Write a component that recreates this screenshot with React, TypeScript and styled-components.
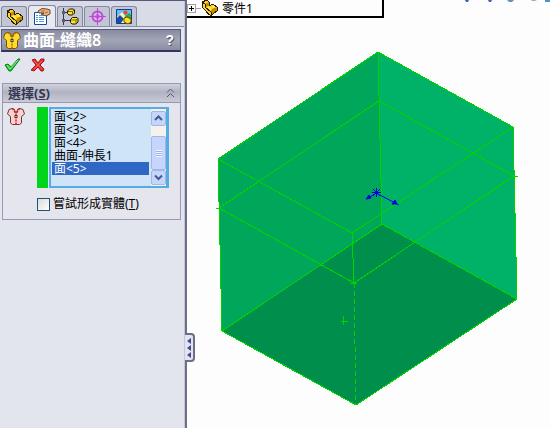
import React, { useState } from "react";
import styled, { createGlobalStyle } from "styled-components";

const GlobalStyle = createGlobalStyle`
  * { box-sizing: border-box; }
  body { margin: 0; background: #fdfdfd; }
  button { padding: 0; border: 0; background: none; font: inherit; color: inherit; }
`;

const Shell = styled.div`
  display: grid;
  grid-template-columns: 187px 1fr;
  min-height: 100vh;
  overflow: hidden;
  font: 12px/13px "Noto Sans", "Noto Sans CJK TC", sans-serif;
  color: #000;
`;

const Sidebar = styled.aside`
  position: relative;
  background: #e2e4ee;
  border-top: 1px solid #555a7c;
  border-right: 2px solid #6c6f87;
  box-shadow: inset -1px 0 #c2c8dc;
`;

const TabStrip = styled.div`
  display: flex;
  align-items: flex-end;
  gap: 1px;
  height: 26px;
  padding-left: 1px;
  margin-right: 1px;
  background: #d9dbe6;
  border-bottom: 1px solid #878ba3;
`;

const Tab = styled.button<{ $active?: boolean }>`
  display: grid;
  place-items: center;
  width: ${(p) => (p.$active ? 28 : 26)}px;
  height: ${(p) => (p.$active ? 22 : 20)}px;
  margin-bottom: ${(p) => (p.$active ? -1 : 0)}px;
  background: ${(p) => (p.$active ? "#e8eaf2" : "#c3c6d5")};
  border: 1px solid #85899f;
  border-bottom: 0;
  border-radius: 3px 3px 0 0;
`;

const TitleBar = styled.header`
  display: flex;
  align-items: center;
  gap: 2px;
  height: 23px;
  margin: 2px 4px 0 1px;
  padding: 0 6px 0 1px;
  background: linear-gradient(#888a9f, #a2a4b6 50%, #8b8da3);
  border: 1px solid #555976;
  border-bottom: 2px solid #34365c;
  color: #fff;
`;

const Title = styled.h1`
  flex: 1;
  margin: 0;
  font-size: 16px;
  line-height: 20px;
  font-weight: 600;
  white-space: nowrap;
`;

const HelpButton = styled.button`
  font: bold 14px/18px "Liberation Sans", sans-serif;
  text-shadow: 1px 1px #55586f;
`;

const Actions = styled.div`
  display: flex;
  gap: 9px;
  padding: 5px 4px 0;
  height: 31px;
`;

const IconButton = styled.button`
  display: block;
  width: 17px;
  height: 17px;
`;

const Group = styled.section`
  margin: 0 4px 0 2px;
  background: #e5e5ed;
  border: 1px solid #969ab2;
`;

const GroupHeader = styled.header`
  display: flex;
  justify-content: space-between;
  align-items: center;
  height: 19px;
  padding: 0 5px;
  background: linear-gradient(#d0d1dc, #b1b3c3 45%, #c9cad7);
  border-bottom: 1px solid #9699ad;
`;

const GroupTitle = styled.h2`
  margin: 0;
  color: #34364f;
  font-size: 13px;
  line-height: 18px;
  font-weight: 700;
`;

const GroupBody = styled.div`
  display: grid;
  grid-template-columns: 29px 1fr;
  column-gap: 5px;
  padding: 4px 11px 8px 0;
`;

const GroupIcon = styled.div`
  padding-left: 4px;
`;

const SelectionBox = styled.div`
  display: flex;
  height: 81px;
  border-left: 11px solid #00d51c;
`;

const ListFrame = styled.div`
  flex: 1;
  display: flex;
  margin-left: 1px;
  background: #cfe4f7;
  border: 2px solid #55ace4;
  border-right-width: 3px;
`;

const FaceList = styled.ul`
  flex: 1;
  margin: 0;
  padding: 1px 2px 0 1px;
  list-style: none;
`;

const FaceItem = styled.li<{ $selected: boolean }>`
  height: 13px;
  padding-left: 2px;
  line-height: 13px;
  white-space: nowrap;
  background: ${(p) => (p.$selected ? "#2f67c5" : "transparent")};
  color: ${(p) => (p.$selected ? "#fff" : "#000")};
`;

const ScrollTrack = styled.div`
  display: flex;
  flex-direction: column;
  width: 15px;
  padding: 2px 0 1px;
  background: #f3f2ed;
`;

const ScrollButton = styled.button`
  display: grid;
  place-items: center;
  height: 15px;
  background: #c6d5fb;
  border: 1px solid #a4b7e4;
  border-radius: 2px;
`;

const ScrollThumb = styled.div`
  display: flex;
  flex-direction: column;
  justify-content: center;
  align-items: center;
  height: 34px;
  margin-top: 10px;
  background: #c6d5fb;
  border: 1px solid #a4b7e4;
  border-radius: 2px;
`;

const Grip = styled.span`
  width: 6px;
  height: 7px;
  background: repeating-linear-gradient(#f4f8ff 0 1px, #9cb1e6 1px 2px);
`;

const CheckLabel = styled.label`
  grid-column: 2;
  display: flex;
  align-items: center;
  gap: 3px;
  margin-top: 9px;
  line-height: 14px;
  white-space: nowrap;
`;

const CheckBox = styled.input`
  appearance: none;
  width: 13px;
  height: 13px;
  margin: 0;
  border: 1px solid #1d5180;
  background: linear-gradient(135deg, #dcdcd6, #fff);
  &:checked { background: #2f67c5; box-shadow: inset 0 0 0 2px #fff; }
`;

const Splitter = styled.button`
  position: absolute;
  z-index: 1;
  top: 332px;
  right: -10px;
  display: flex;
  flex-direction: column;
  align-items: center;
  justify-content: space-around;
  width: 10px;
  height: 29px;
  padding: 2px 0;
  background: #e2e4ee;
  border: 2px solid #6c6f87;
  border-left: 0;
  border-radius: 0 4px 4px 0;
`;

const Viewport = styled.main`
  display: flex;
  flex-direction: column;
  min-width: 0;
  background: #fdfdfd;
`;

const TopRow = styled.div`
  display: flex;
  justify-content: space-between;
  align-items: flex-start;
`;

const FeatureTree = styled.nav`
  display: flex;
  align-items: center;
  flex: 0 0 197px;
  height: 18px;
  border-right: 2px solid #000;
  border-bottom: 2px solid #000;
`;

const Expander = styled.button`
  display: grid;
  place-items: center;
  width: 9px;
  height: 9px;
  border: 1px solid #a5a5a0;
`;

const Connector = styled.span`
  width: 5px;
  border-top: 1px solid #a5a5a0;
`;

const TreeLabel = styled.span`
  margin-left: 4px;
`;

const Scene = styled.svg`
  flex: 1;
  display: block;
  width: 100%;
  min-height: 0;
`;

const Drawing = styled.svg`
  display: block;
  flex: none;
`;

function PartIcon() {
  return (
    <Drawing width="17" height="16" viewBox="0 0 17 16">
      <path d="M1 2 6 0 8 2 8 6 12 4 16 7 16 11 10 15.500 8 14.500 1 7Z" fill="#ffd427" />
      <path d="M4 4 8 2V6L11 9 16 7V11L10 15V11L4 7Z" fill="#c48a00" />
      <path d="M5 7 8 6 11 9 10 11ZM11 6 13 5 15 7 12 8Z" fill="#fff04a" />
      <path d="M1 2 6 0 8 2 8 6 12 4 16 7 16 11 10 15.500 8 14.500 1 7ZM1 2 4 4 4 7 10 12V15" fill="none" stroke="#2b1d00" strokeWidth="1" shapeRendering="crispEdges" />
    </Drawing>
  );
}

function PropertyIcon() {
  return (
    <Drawing width="18" height="17" viewBox="0 0 18 17">
      <path d="M1.500 4.500H10L13.500 8V16.500H1.500Z" fill="#fff" stroke="#164d91" />
      <path d="M3 7.500H5M6 7.500H11M3 9.500H5M6 9.500H11M3 11.500H5M6 11.500H11M3 13.500H5M6 13.500H11" stroke="#4c9be3" />
      <path d="M5 3 9 0.500 14 1 17 2V6L13 8 8 6 11 5 6 5Z" fill="#e8b184" stroke="#744620" />
      <path d="M8 3H12M12 5 15 4" stroke="#a96e42" />
    </Drawing>
  );
}

function ConfigIcon() {
  return (
    <Drawing width="17" height="17" viewBox="0 0 17 17">
      <path d="M1.500 0V17M2 4.500H6M2 12.500H8" fill="none" stroke="#35374a" />
      <path d="M0 3H3V6H0ZM0 11H3V14H0Z" fill="#5b5f77" />
      <path d="M5.500 3 7.500 1H11.500L12.500 2V5L10.500 7H7L5.500 5.500ZM8.500 11.500 10.500 9.500H15L16 10.500V14L14 16H10L8.500 14.500Z" fill="#ffe231" stroke="#1a1800" />
      <path d="M6 3.500H10.500V6.500M9 12H14V15.500M10.500 3.500 12 2M14 12 16 10.500" fill="none" stroke="#756600" />
    </Drawing>
  );
}

function DimensionIcon() {
  return (
    <Drawing width="17" height="17" viewBox="0 0 17 17" fill="none" stroke="#c545df">
      <path d="M8.500 0V17M0 8.500H17" strokeWidth="1" />
      <circle cx="8.500" cy="8.500" r="5" strokeWidth="2" />
      <path d="M6 8.500H11M8.500 6V11" strokeWidth="2" />
    </Drawing>
  );
}

function DisplayIcon() {
  return (
    <Drawing width="17" height="17" viewBox="0 0 17 17">
      <path d="M.5 1.500H15.500V15.500H.5Z" fill="#67bbff" stroke="#123f81" />
      <path d="M1 9 6 4 9 8V15H1Z" fill="#fff4a2" />
      <path d="M9 8 13 5 15 7V15H9Z" fill="#30ac3b" />
      <circle cx="9.500" cy="4.500" r="2" fill="#f04028" />
      <path d="M1 10 4 7 8 11 5 15H1Z" fill="#194aae" />
      <path d="M8 10 11 9 15 11V14L12 16 8 14Z" fill="#ffdd22" stroke="#765200" />
    </Drawing>
  );
}

function KnitIcon({ fill = "#ffdc2c", seam = "#b26d00", stroke = "#7a5000" }) {
  return (
    <Drawing width="18" height="19" viewBox="0 0 18 19">
      <path d="M5 1.500 7 2 9 6 11 2 13 1.500 16 2.500 17.500 7 14.500 9.500V16L12.500 17.500H5.500L3.500 16V9.500L.5 7 2 2.500Z" fill={fill} stroke={stroke} strokeLinejoin="round" />
      <path d="M5.500 1.500 9 7V17.500M12.500 1.500 9 7" fill="none" stroke={seam} strokeWidth="1.500" strokeDasharray="2 1" />
      <path d="M7.500 8H10.500V11H7.500Z" fill="#3f3940" />
      <path d="M8.500 9H9.500V10H8.500Z" fill="#fff" />
    </Drawing>
  );
}

function CheckIcon() {
  return (
    <Drawing width="17" height="17" viewBox="0 0 17 17">
      <path d="M1 8 4 7 7 10 14 2 16 2 7 14 5 14Z" fill="#29ce38" stroke="#087b19" strokeLinejoin="round" />
      <path d="M3 8 6 12 14 3" fill="none" stroke="#8af28b" />
    </Drawing>
  );
}

function CrossIcon() {
  return (
    <Drawing width="17" height="17" viewBox="0 0 17 17">
      <path d="M2 3 5 2 8 6 11 2 14 2 14 4 10 8 14 12 13 14 11 14 8 10 4 14 1 13 6 8Z" fill="#ee3334" stroke="#a3131b" strokeLinejoin="round" />
      <path d="M4 4 12 12M12 4 4 12" stroke="#f85555" />
    </Drawing>
  );
}

function Chevron({ down = false }: { down?: boolean }) {
  return (
    <Drawing width="9" height="7" viewBox="0 0 9 7">
      <path d={down ? "M1 1.500 4.500 5 8 1.500" : "M1 5 4.500 1.500 8 5"} fill="none" stroke="#435b8b" strokeWidth="2" />
    </Drawing>
  );
}

function CollapseIcon() {
  return (
    <Drawing width="9" height="10" viewBox="0 0 9 10">
      <path d="M1 4.500 4.500 1 8 4.500M1 9 4.500 5.500 8 9" fill="none" stroke="#54576f" />
    </Drawing>
  );
}

function ToolbarEdge() {
  return (
    <Drawing width="85" height="3" viewBox="0 0 85 3">
      <path d="M0 0H4L3 2H1ZM23 0H27L26 2H24Z" fill="#405fc0" />
      <path d="M42 0H49L47 2H44Z" fill="#6a8eb4" />
      <path d="M66 0H72L70 1H67Z" fill="#aaa" />
      <path d="M80 0H85V2H80Z" fill="#4a94cb" />
    </Drawing>
  );
}

function Model() {
  return (
    <Scene viewBox="187 18 363 410" role="img" aria-label="零件1">
      <path d="M378 52 218 159 222 331 382 224Z" fill="#00a65a" />
      <path d="M378 52 513 127 517 299 382 224Z" fill="#00b168" />
      <path d="M382 224 517 299 356 405 222 331Z" fill="#008e4c" />
      <g fill="none" stroke="#00d400" shapeRendering="crispEdges">
        <path d="M378 52 218 159 222 331 356 405 517 299 513 127ZM378 52 382 224 517 299M382 224 222 331" />
        <path d="M218 159 352 233 513 127M352 233 354 283" />
        <path d="M216 208H219L379 101 514 176H518M219 208 354 283 514 176" />
        <path d="M354 283 356 405" strokeDasharray="5 3" />
        <path d="M343.500 316V325M341 321.500H348M350 283.500H357" />
      </g>
      <g fill="none" stroke="#0000e8">
        <path d="M372 192.500H381M376.500 188V197M373 189 380 196M380 189 373 196M376 193 367 199M376 193 399 205" />
        <path d="M366 199 369 195 371 198ZM397 204 392 204 395 200Z" fill="#0000e8" />
      </g>
    </Scene>
  );
}

const tabs = [
  { label: "FeatureManager", icon: <PartIcon /> },
  { label: "PropertyManager", icon: <PropertyIcon /> },
  { label: "ConfigurationManager", icon: <ConfigIcon /> },
  { label: "DimXpertManager", icon: <DimensionIcon /> },
  { label: "DisplayManager", icon: <DisplayIcon /> },
];

const faces = ["面<2>", "面<3>", "面<4>", "曲面-伸長1", "面<5>"];

export default function App() {
  const [tab, setTab] = useState(1);
  const [selected, setSelected] = useState(4);
  return (
    <Shell>
      <GlobalStyle />
      <Sidebar>
        <TabStrip role="tablist">
          {tabs.map((t, i) => (
            <Tab key={t.label} role="tab" aria-label={t.label} aria-selected={i === tab} $active={i === tab} onClick={() => setTab(i)}>
              {t.icon}
            </Tab>
          ))}
        </TabStrip>
        <TitleBar>
          <KnitIcon />
          <Title>曲面-縫織8</Title>
          <HelpButton>?</HelpButton>
        </TitleBar>
        <Actions>
          <IconButton aria-label="確定"><CheckIcon /></IconButton>
          <IconButton aria-label="取消"><CrossIcon /></IconButton>
        </Actions>
        <Group>
          <GroupHeader>
            <GroupTitle>選擇(<u>S</u>)</GroupTitle>
            <button aria-label="收合"><CollapseIcon /></button>
          </GroupHeader>
          <GroupBody>
            <GroupIcon><KnitIcon fill="#ffd0cc" seam="#f01820" stroke="#593e43" /></GroupIcon>
            <SelectionBox>
              <ListFrame>
                <FaceList role="listbox" aria-label="選擇">
                  {faces.map((face, i) => (
                    <FaceItem key={face} role="option" aria-selected={i === selected} $selected={i === selected} onClick={() => setSelected(i)}>
                      {face}
                    </FaceItem>
                  ))}
                </FaceList>
                <ScrollTrack>
                  <ScrollButton aria-label="向上"><Chevron /></ScrollButton>
                  <ScrollThumb><Grip /></ScrollThumb>
                  <ScrollButton aria-label="向下"><Chevron down /></ScrollButton>
                </ScrollTrack>
              </ListFrame>
            </SelectionBox>
            <CheckLabel>
              <CheckBox type="checkbox" />
              <span>嘗試形成實體(<u>T</u>)</span>
            </CheckLabel>
          </GroupBody>
        </Group>
        <Splitter aria-label="收合面板">
          {[0, 1, 2].map((n) => (
            <Drawing key={n} width="4" height="6" viewBox="0 0 4 6"><path d="M4 0V6L0 3Z" fill="#454794" /></Drawing>
          ))}
        </Splitter>
      </Sidebar>
      <Viewport>
        <TopRow>
          <FeatureTree>
            <Expander aria-label="展開">
              <Drawing width="5" height="5" viewBox="0 0 5 5"><path d="M0 2.500H5M2.500 0V5" stroke="#000" /></Drawing>
            </Expander>
            <Connector />
            <PartIcon />
            <TreeLabel>零件1</TreeLabel>
          </FeatureTree>
          <ToolbarEdge />
        </TopRow>
        <Model />
      </Viewport>
    </Shell>
  );
}
